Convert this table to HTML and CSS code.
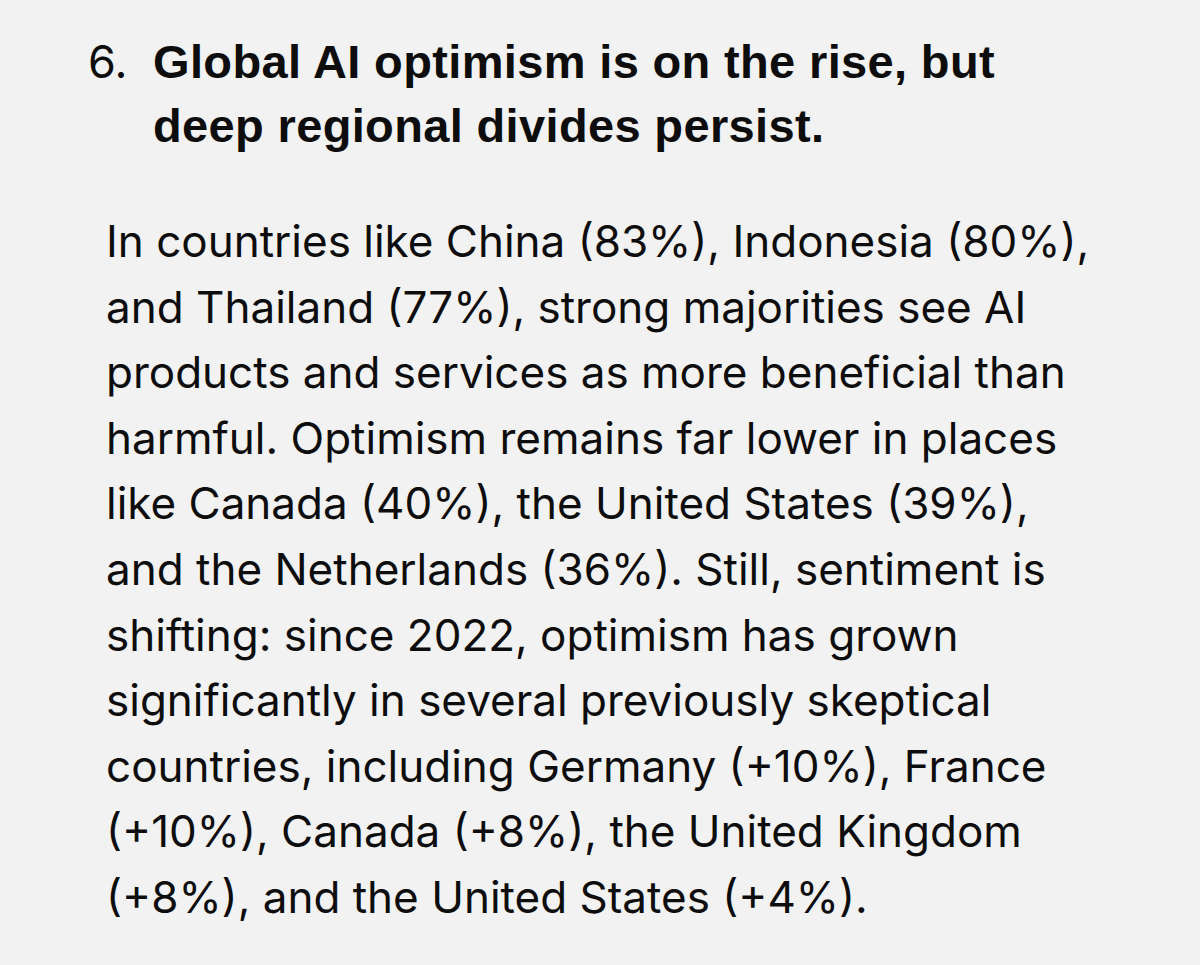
FILE: index.html
```html
<!DOCTYPE html>
<html lang="en">
<head>
<meta charset="utf-8">
<title>Global AI optimism</title>
<link rel="stylesheet" href="styles.css">
</head>
<body>
<article class="finding">
  <h2 class="finding-title">
    <span class="finding-num">6.</span>
    <span class="finding-text">Global AI optimism is on the rise, but<br>deep regional divides persist.</span>
  </h2>
  <p class="finding-body">In countries like China (83%), Indonesia (80%),<br>and Thailand (77%), strong majorities see AI<br>products and services as more beneficial than<br>harmful. Optimism remains far lower in places<br>like Canada (40%), the United States (39%),<br>and the Netherlands (36%). Still, sentiment is<br>shifting: since 2022, optimism has grown<br>significantly in several previously skeptical<br>countries, including Germany (+10%), France<br>(+10%), Canada (+8%), the United Kingdom<br>(+8%), and the United States (+4%).</p>
</article>
</body>
</html>
```

FILE: styles.css
```css
html, body {
  margin: 0;
  padding: 0;
  background: #f2f2f2;
}
body {
  width: 1200px;
  height: 965px;
  overflow: hidden;
  font-family: Inter, "Liberation Sans", sans-serif;
  color: #0d0d0d;
}
.finding {
  padding: 30px 0 0 88px;
}
.finding-title {
  display: flex;
  margin: 0;
  font-size: 45px;
  line-height: 64px;
  font-weight: 700;
  white-space: nowrap;
}
.finding-num {
  width: 65px;
  flex: none;
  font-weight: 400;
}
.finding-text {
  font-family: "Liberation Sans", Arial, sans-serif;
  font-size: 47px;
  letter-spacing: 0.35px;
}
.finding-body {
  margin: 51px 0 0 18px;
  font-size: 44px;
  line-height: 65.6px;
  font-weight: 400;
  white-space: nowrap;
}
```
